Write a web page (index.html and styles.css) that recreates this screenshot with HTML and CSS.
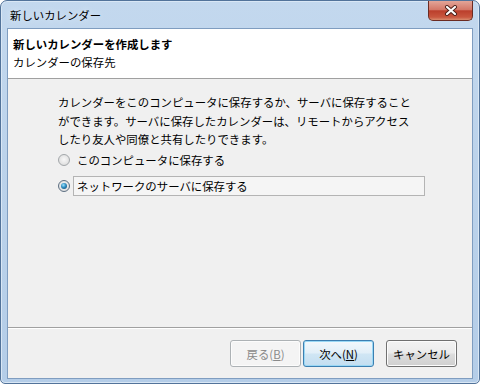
FILE: index.html
```html
<!DOCTYPE HTML>
<html>
    <head>
        <meta charset="UTF-8">
        <title>新しいカレンダー</title>
        <link rel="stylesheet" href="styles.css">
    </head>
    <body>
        <div class="window">
            <div class="titlebar">
                <span class="title">新しいカレンダー</span>
                <span class="close">
                    <svg width="14" height="11" viewBox="0 0 14 11">
                        <path d="M3 2 L11 9 M11 2 L3 9" stroke="#4a1d16" stroke-width="4" stroke-linecap="round"/>
                        <path d="M3 2 L11 9 M11 2 L3 9" stroke="#fff" stroke-width="2.2" stroke-linecap="round"/>
                    </svg>
                </span>
            </div>
            <div class="client">
                <div class="head">
                    <p class="head-title">新しいカレンダーを作成します</p>
                    <p class="head-sub">カレンダーの保存先</p>
                </div>
                <div class="main">
                    <div class="content">
                        <p class="desc">カレンダーをこのコンピュータに保存するか、サーバに保存すること<br>ができます。サーバに保存したカレンダーは、リモートからアクセス<br>したり友人や同僚と共有したりできます。</p>
                        <ul class="options">
                            <li><span class="radio"></span><span class="label">このコンピュータに保存する</span></li>
                            <li><span class="radio on"></span><span class="label focus">ネットワークのサーバに保存する</span></li>
                        </ul>
                    </div>
                    <div class="footer">
                        <button class="btn disabled">戻る(<u>B</u>)</button>
                        <button class="btn default">次へ(<u>N</u>)</button>
                        <button class="btn cancel">キャンセル</button>
                    </div>
                </div>
            </div>
        </div>
    </body>
</html>
```

FILE: styles.css
```css
body{margin:0;font-family:"Noto Sans CJK JP","Noto Sans",sans-serif;font-size:11.4px;color:#000;}
p,ul,li{margin:0;padding:0;list-style:none;}

.window{
    position: relative;
    box-sizing: border-box;
    width: 480px;
    height: 384px;
    padding: 0 6px 6px;
    border: 1px solid #52739a;
    border-radius: 7px 7px 5px 5px;
    background: linear-gradient(to bottom,#c3d8ee 0%,#bcd3eb 40%,#b4cde8 100%);
    box-shadow: inset 0 0 0 1px #d9e7f5;
}
.titlebar{
    height: 27px;
    line-height: 29px;
    padding-left: 3px;
}
.title{
    font-size: 11.4px;
    text-shadow: 0 0 6px #e8f1fa;
}
.close{
    position: absolute;
    top: 0;
    right: 6px;
    display: flex;
    align-items: center;
    justify-content: center;
    width: 43px;
    height: 19px;
    border: 1px solid #6b2b22;
    border-top: none;
    border-radius: 0 0 5px 5px;
    background: linear-gradient(to bottom,#e3a598 0%,#d47868 45%,#bb3f2c 52%,#c9573f 85%,#d98c6e 100%);
}
.client{
    display: flex;
    flex-direction: column;
    height: 349px;
    border: 1px solid #7f9dc0;
    background: #f0f0f0;
}
.head{
    height: 50px;
    box-sizing: border-box;
    padding: 6px 0 0 5px;
    line-height: 18px;
    background: #fff;
    border-bottom: 1px solid #a0a0a0;
}
.head-title{font-weight: bold;}
.main{
    flex: 1;
    display: flex;
    flex-direction: column;
}
.content{
    flex: 1;
    padding: 14px 0 0 50px;
}
.desc{line-height: 18.5px;}
.options{
    display: flex;
    flex-direction: column;
    gap: 6px;
    margin-top: 1px;
}
.options li{
    display: flex;
    align-items: center;
    height: 20px;
}
.radio{
    box-sizing: border-box;
    width: 12px;
    height: 12px;
    border: 1px solid #a3a7aa;
    border-radius: 50%;
    background: radial-gradient(circle at 50% 45%,#f8f8f8 0%,#e4e4e4 60%,#cfd0d1 100%);
    display: flex;
    align-items: center;
    justify-content: center;
}
.radio.on{border-color: #5d6f82;}
.radio.on:after{
    content: "";
    width: 6px;
    height: 6px;
    border-radius: 50%;
    background: radial-gradient(circle at 40% 35%,#9ee4ff 0%,#2f8cc0 45%,#0f3f66 100%);
}
.label{
    box-sizing: border-box;
    height: 20px;
    line-height: 18px;
    margin-left: 3px;
    padding-left: 3px;
    border: 1px solid transparent;
}
.label.focus{
    width: 352px;
    border-color: #b4b4b4;
    background: #f5f5f5;
}
.footer{
    display: flex;
    justify-content: flex-end;
    padding: 12px 15px 11px 0;
    border-top: 1px solid #a0a0a0;
    box-shadow: inset 0 1px 0 #fff;
}
.btn{
    box-sizing: border-box;
    width: 71px;
    height: 27px;
    padding: 0;
    font-family: inherit;
    font-size: 11.4px;
    color: #000;
    border: 1px solid #707070;
    border-radius: 3px;
    background: linear-gradient(to bottom,#f3f3f3 0%,#ebebeb 48%,#dddddd 52%,#cfcfcf 100%);
    box-shadow: inset 0 0 0 1px #fcfcfc;
}
.btn.disabled{
    color: #8a8a8a;
    border-color: #adb2b5;
    background: #f4f4f4;
}
.btn.default{
    margin-left: 2px;
    border-color: #3c7fb1;
    background: linear-gradient(to bottom,#f2f8fc 0%,#e2eff8 48%,#d0e6f4 52%,#c3def1 100%);
    box-shadow: inset 0 0 0 1px #9ad8f5;
}
.btn.cancel{margin-left: 12px;}
```
